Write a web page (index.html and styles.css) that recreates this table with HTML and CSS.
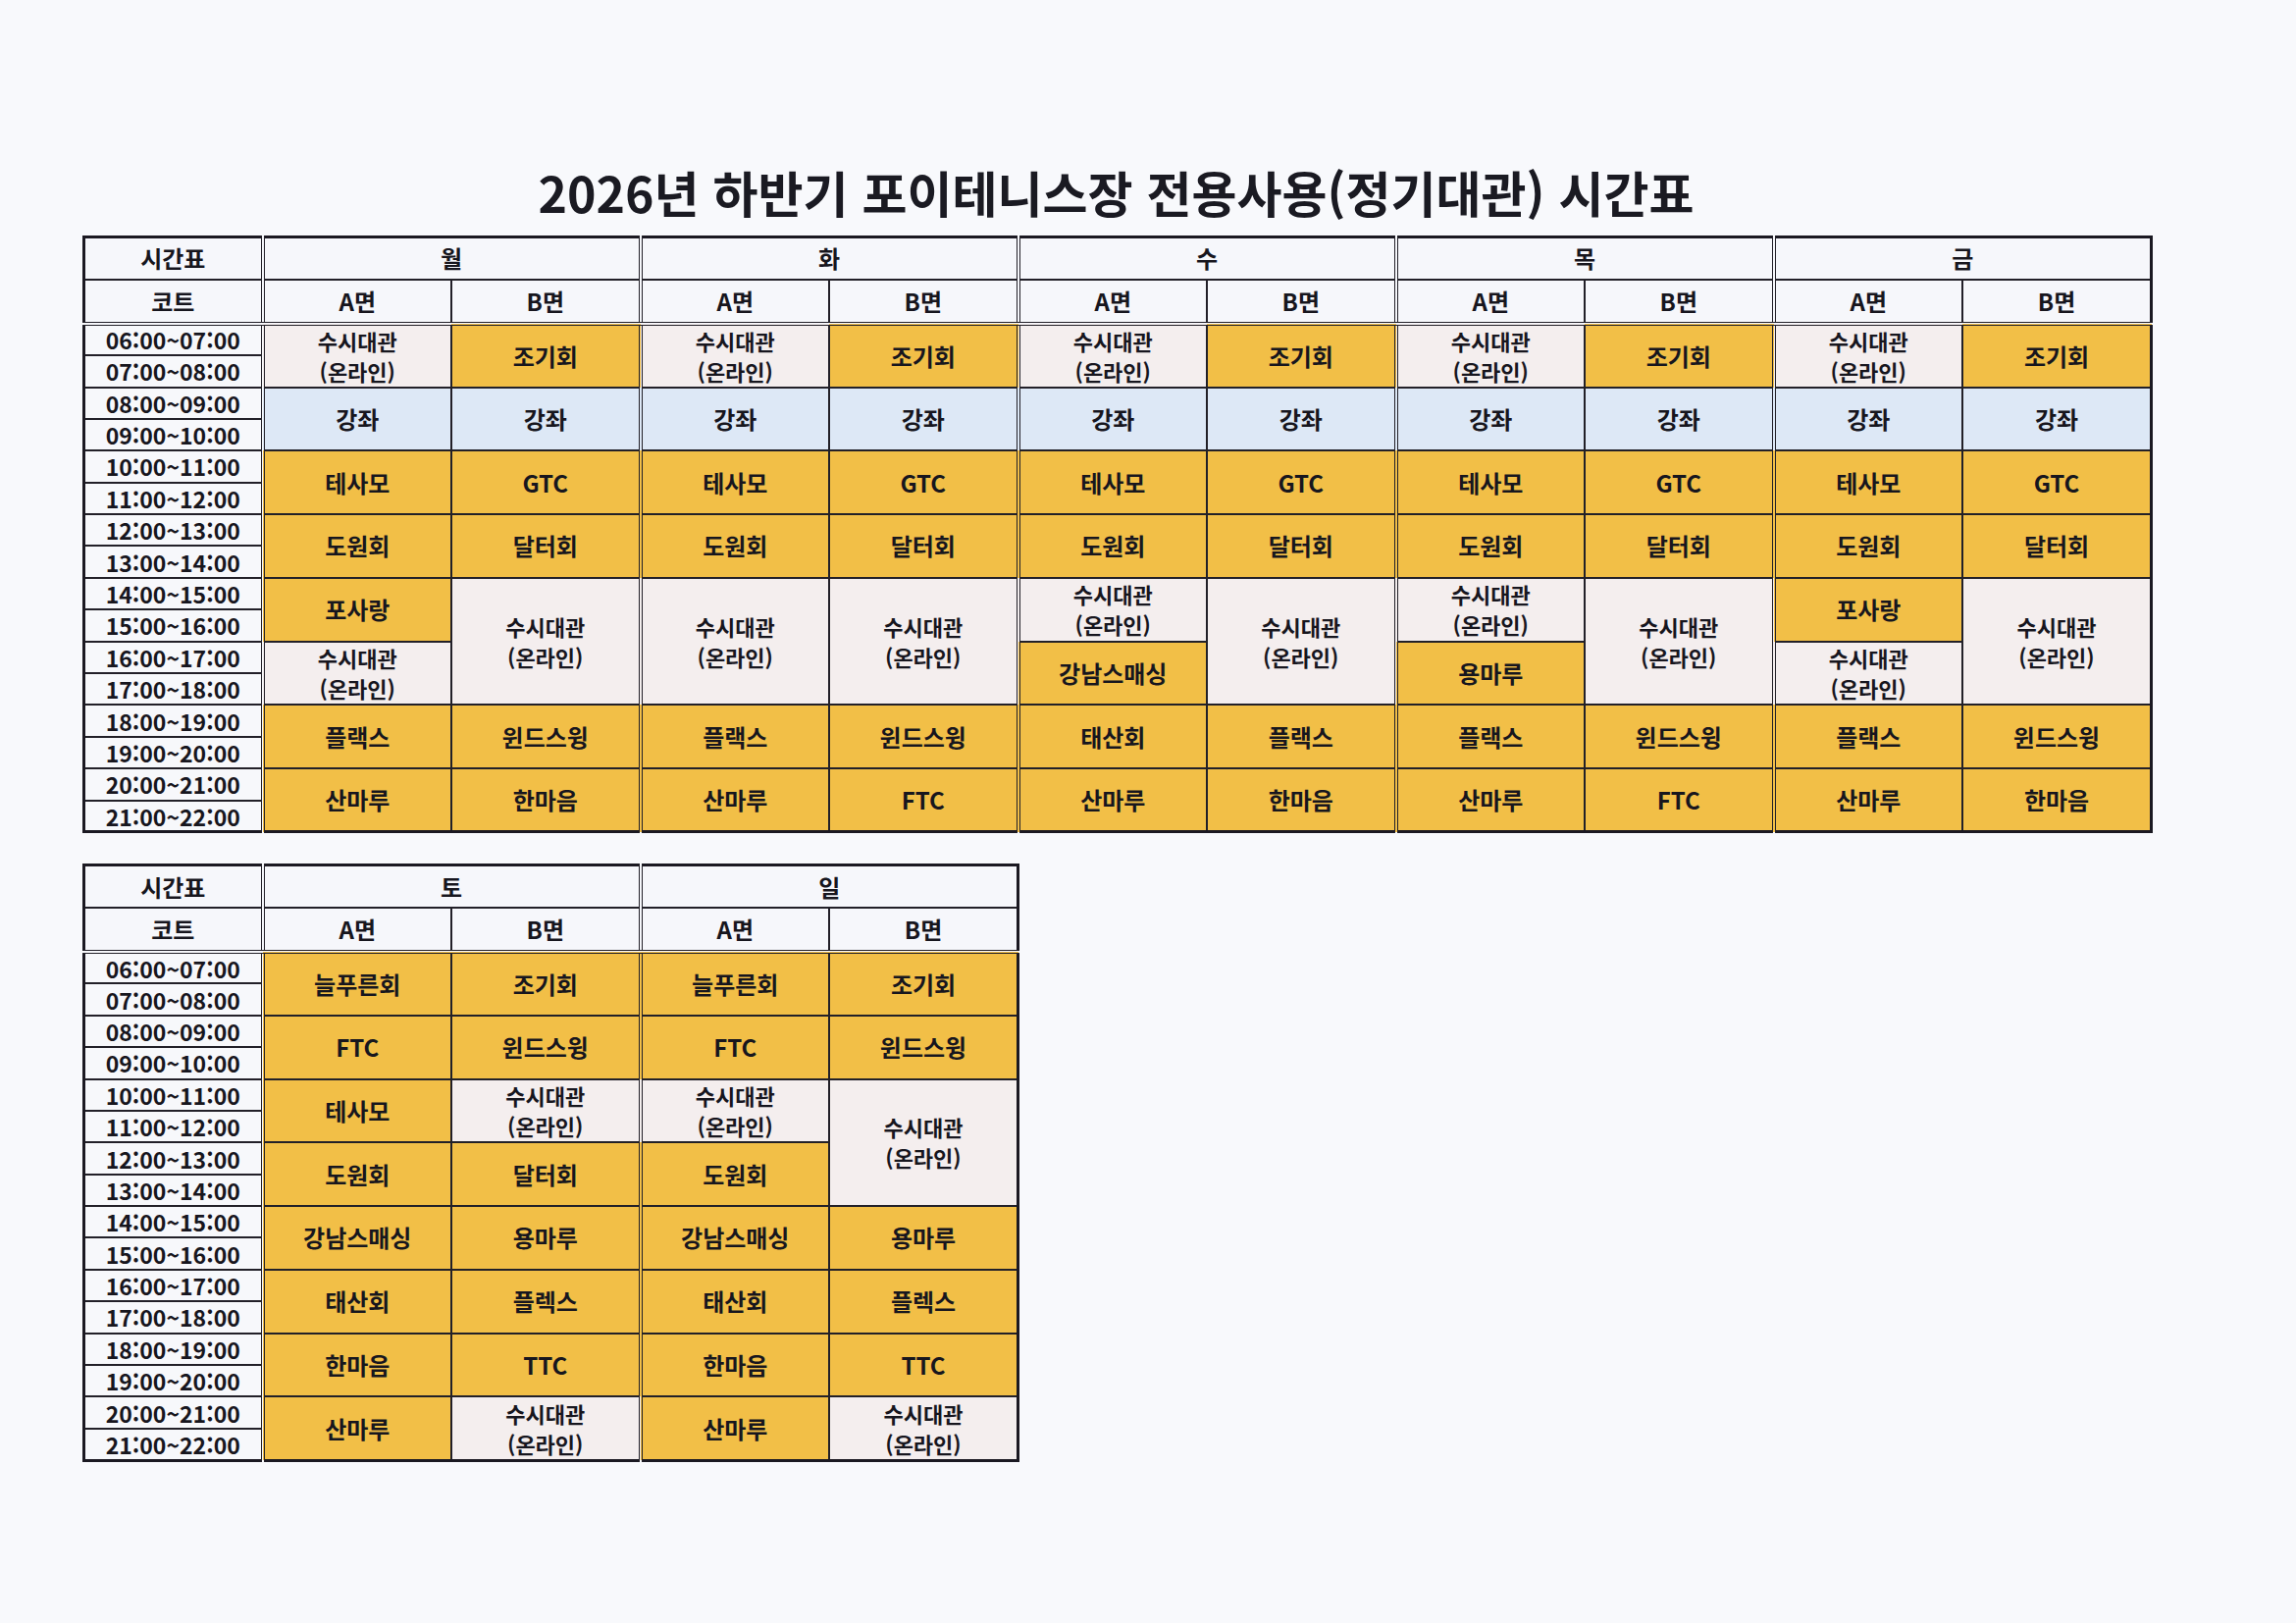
FILE: index.html
```html
<!DOCTYPE html>
<html lang="ko">
<head>
<meta charset="utf-8">
<title>2026년 하반기 포이테니스장 전용사용(정기대관) 시간표</title>
<link rel="stylesheet" href="styles.css">
</head>
<body>
<div class="page">
  <h1 class="title">2026년 하반기 포이테니스장 전용사용(정기대관) 시간표</h1>

  <table class="grid t1">
    <colgroup>
      <col class="tc">
      <col class="sc"><col class="sc"><col class="sc"><col class="sc"><col class="sc">
      <col class="sc"><col class="sc"><col class="sc"><col class="sc"><col class="sc">
    </colgroup>
    <thead>
      <tr class="h1">
        <th class="hd">시간표</th>
        <th class="hd ds" colspan="2">월</th>
        <th class="hd ds" colspan="2">화</th>
        <th class="hd ds" colspan="2">수</th>
        <th class="hd ds" colspan="2">목</th>
        <th class="hd ds" colspan="2">금</th>
      </tr>
      <tr class="h2">
        <th class="hd">코트</th>
        <th class="hd ds">A면</th><th class="hd">B면</th>
        <th class="hd ds">A면</th><th class="hd">B면</th>
        <th class="hd ds">A면</th><th class="hd">B면</th>
        <th class="hd ds">A면</th><th class="hd">B면</th>
        <th class="hd ds">A면</th><th class="hd">B면</th>
      </tr>
    </thead>
    <tbody>
      <tr>
        <td class="tm">06:00~07:00</td>
        <td class="p ds" rowspan="2">수시대관<br>(온라인)</td><td class="o" rowspan="2">조기회</td>
        <td class="p ds" rowspan="2">수시대관<br>(온라인)</td><td class="o" rowspan="2">조기회</td>
        <td class="p ds" rowspan="2">수시대관<br>(온라인)</td><td class="o" rowspan="2">조기회</td>
        <td class="p ds" rowspan="2">수시대관<br>(온라인)</td><td class="o" rowspan="2">조기회</td>
        <td class="p ds" rowspan="2">수시대관<br>(온라인)</td><td class="o" rowspan="2">조기회</td>
      </tr>
      <tr><td class="tm">07:00~08:00</td></tr>
      <tr>
        <td class="tm">08:00~09:00</td>
        <td class="b ds" rowspan="2">강좌</td><td class="b" rowspan="2">강좌</td>
        <td class="b ds" rowspan="2">강좌</td><td class="b" rowspan="2">강좌</td>
        <td class="b ds" rowspan="2">강좌</td><td class="b" rowspan="2">강좌</td>
        <td class="b ds" rowspan="2">강좌</td><td class="b" rowspan="2">강좌</td>
        <td class="b ds" rowspan="2">강좌</td><td class="b" rowspan="2">강좌</td>
      </tr>
      <tr><td class="tm">09:00~10:00</td></tr>
      <tr>
        <td class="tm">10:00~11:00</td>
        <td class="o ds" rowspan="2">테사모</td><td class="o" rowspan="2">GTC</td>
        <td class="o ds" rowspan="2">테사모</td><td class="o" rowspan="2">GTC</td>
        <td class="o ds" rowspan="2">테사모</td><td class="o" rowspan="2">GTC</td>
        <td class="o ds" rowspan="2">테사모</td><td class="o" rowspan="2">GTC</td>
        <td class="o ds" rowspan="2">테사모</td><td class="o" rowspan="2">GTC</td>
      </tr>
      <tr><td class="tm">11:00~12:00</td></tr>
      <tr>
        <td class="tm">12:00~13:00</td>
        <td class="o ds" rowspan="2">도원회</td><td class="o" rowspan="2">달터회</td>
        <td class="o ds" rowspan="2">도원회</td><td class="o" rowspan="2">달터회</td>
        <td class="o ds" rowspan="2">도원회</td><td class="o" rowspan="2">달터회</td>
        <td class="o ds" rowspan="2">도원회</td><td class="o" rowspan="2">달터회</td>
        <td class="o ds" rowspan="2">도원회</td><td class="o" rowspan="2">달터회</td>
      </tr>
      <tr><td class="tm">13:00~14:00</td></tr>
      <tr>
        <td class="tm">14:00~15:00</td>
        <td class="o ds" rowspan="2">포사랑</td><td class="p" rowspan="4">수시대관<br>(온라인)</td>
        <td class="p ds" rowspan="4">수시대관<br>(온라인)</td><td class="p" rowspan="4">수시대관<br>(온라인)</td>
        <td class="p ds" rowspan="2">수시대관<br>(온라인)</td><td class="p" rowspan="4">수시대관<br>(온라인)</td>
        <td class="p ds" rowspan="2">수시대관<br>(온라인)</td><td class="p" rowspan="4">수시대관<br>(온라인)</td>
        <td class="o ds" rowspan="2">포사랑</td><td class="p" rowspan="4">수시대관<br>(온라인)</td>
      </tr>
      <tr><td class="tm">15:00~16:00</td></tr>
      <tr>
        <td class="tm">16:00~17:00</td>
        <td class="p ds" rowspan="2">수시대관<br>(온라인)</td>
        <td class="o ds" rowspan="2">강남스매싱</td>
        <td class="o ds" rowspan="2">용마루</td>
        <td class="p ds" rowspan="2">수시대관<br>(온라인)</td>
      </tr>
      <tr><td class="tm">17:00~18:00</td></tr>
      <tr>
        <td class="tm">18:00~19:00</td>
        <td class="o ds" rowspan="2">플랙스</td><td class="o" rowspan="2">윈드스윙</td>
        <td class="o ds" rowspan="2">플랙스</td><td class="o" rowspan="2">윈드스윙</td>
        <td class="o ds" rowspan="2">태산회</td><td class="o" rowspan="2">플랙스</td>
        <td class="o ds" rowspan="2">플랙스</td><td class="o" rowspan="2">윈드스윙</td>
        <td class="o ds" rowspan="2">플랙스</td><td class="o" rowspan="2">윈드스윙</td>
      </tr>
      <tr><td class="tm">19:00~20:00</td></tr>
      <tr>
        <td class="tm">20:00~21:00</td>
        <td class="o ds" rowspan="2">산마루</td><td class="o" rowspan="2">한마음</td>
        <td class="o ds" rowspan="2">산마루</td><td class="o" rowspan="2">FTC</td>
        <td class="o ds" rowspan="2">산마루</td><td class="o" rowspan="2">한마음</td>
        <td class="o ds" rowspan="2">산마루</td><td class="o" rowspan="2">FTC</td>
        <td class="o ds" rowspan="2">산마루</td><td class="o" rowspan="2">한마음</td>
      </tr>
      <tr><td class="tm">21:00~22:00</td></tr>
    </tbody>
  </table>

  <table class="grid t2">
    <colgroup>
      <col class="tc">
      <col class="sc"><col class="sc"><col class="sc"><col class="sc">
    </colgroup>
    <thead>
      <tr class="h1">
        <th class="hd">시간표</th>
        <th class="hd ds" colspan="2">토</th>
        <th class="hd ds" colspan="2">일</th>
      </tr>
      <tr class="h2">
        <th class="hd">코트</th>
        <th class="hd ds">A면</th><th class="hd">B면</th>
        <th class="hd ds">A면</th><th class="hd">B면</th>
      </tr>
    </thead>
    <tbody>
      <tr>
        <td class="tm">06:00~07:00</td>
        <td class="o ds" rowspan="2">늘푸른회</td><td class="o" rowspan="2">조기회</td>
        <td class="o ds" rowspan="2">늘푸른회</td><td class="o" rowspan="2">조기회</td>
      </tr>
      <tr><td class="tm">07:00~08:00</td></tr>
      <tr>
        <td class="tm">08:00~09:00</td>
        <td class="o ds" rowspan="2">FTC</td><td class="o" rowspan="2">윈드스윙</td>
        <td class="o ds" rowspan="2">FTC</td><td class="o" rowspan="2">윈드스윙</td>
      </tr>
      <tr><td class="tm">09:00~10:00</td></tr>
      <tr>
        <td class="tm">10:00~11:00</td>
        <td class="o ds" rowspan="2">테사모</td><td class="p" rowspan="2">수시대관<br>(온라인)</td>
        <td class="p ds" rowspan="2">수시대관<br>(온라인)</td><td class="p" rowspan="4">수시대관<br>(온라인)</td>
      </tr>
      <tr><td class="tm">11:00~12:00</td></tr>
      <tr>
        <td class="tm">12:00~13:00</td>
        <td class="o ds" rowspan="2">도원회</td><td class="o" rowspan="2">달터회</td>
        <td class="o ds" rowspan="2">도원회</td>
      </tr>
      <tr><td class="tm">13:00~14:00</td></tr>
      <tr>
        <td class="tm">14:00~15:00</td>
        <td class="o ds" rowspan="2">강남스매싱</td><td class="o" rowspan="2">용마루</td>
        <td class="o ds" rowspan="2">강남스매싱</td><td class="o" rowspan="2">용마루</td>
      </tr>
      <tr><td class="tm">15:00~16:00</td></tr>
      <tr>
        <td class="tm">16:00~17:00</td>
        <td class="o ds" rowspan="2">태산회</td><td class="o" rowspan="2">플렉스</td>
        <td class="o ds" rowspan="2">태산회</td><td class="o" rowspan="2">플렉스</td>
      </tr>
      <tr><td class="tm">17:00~18:00</td></tr>
      <tr>
        <td class="tm">18:00~19:00</td>
        <td class="o ds" rowspan="2">한마음</td><td class="o" rowspan="2">TTC</td>
        <td class="o ds" rowspan="2">한마음</td><td class="o" rowspan="2">TTC</td>
      </tr>
      <tr><td class="tm">19:00~20:00</td></tr>
      <tr>
        <td class="tm">20:00~21:00</td>
        <td class="o ds" rowspan="2">산마루</td><td class="p" rowspan="2">수시대관<br>(온라인)</td>
        <td class="o ds" rowspan="2">산마루</td><td class="p" rowspan="2">수시대관<br>(온라인)</td>
      </tr>
      <tr><td class="tm">21:00~22:00</td></tr>
    </tbody>
  </table>
</div>
</body>
</html>
```

FILE: styles.css
```css
html, body {
  margin: 0;
  padding: 0;
}

body {
  background: #f8f9fc;
  color: #17161e;
  font-family: "Noto Sans CJK KR", "Noto Sans", sans-serif;
}

.page {
  padding: 164px 0 0 84px;
  width: 2107px;
}

.title {
  margin: 0 0 14px;
  font-size: 50px;
  line-height: 62px;
  font-weight: 700;
  text-align: center;
  color: #1a1a22;
}

.grid {
  border-collapse: collapse;
  table-layout: fixed;
  border: 3px solid #1b1922;
}

.t1 {
  width: 2107px;
}

.t2 {
  width: 954px;
  margin-top: 31px;
}

col.tc {
  width: 182px;
}

col.sc {
  width: 192.5px;
}

.grid th,
.grid td {
  border: 2px solid #222028;
  padding: 0;
  text-align: center;
  vertical-align: middle;
  font-size: 24px;
  line-height: 30px;
  font-weight: 600;
  white-space: nowrap;
}

.grid tr.h1 {
  height: 43px;
}

.grid tr.h2 {
  height: 45px;
}

.grid tr.h2 th {
  border-bottom: 4px double #222028;
}

.grid tbody tr {
  height: 32.4px;
}

.grid .hd {
  background: #f6f7fb;
}

.grid .tm {
  background: #f7f8fb;
  font-size: 23px;
  line-height: 28px;
}

.grid .ds {
  border-left: 4px double #222028;
}

.grid .o {
  background: #f2bf47;
}

.grid .b {
  background: #dde8f6;
}

.grid .p {
  background: #f4eeee;
  font-size: 22px;
  line-height: 31px;
}
```
